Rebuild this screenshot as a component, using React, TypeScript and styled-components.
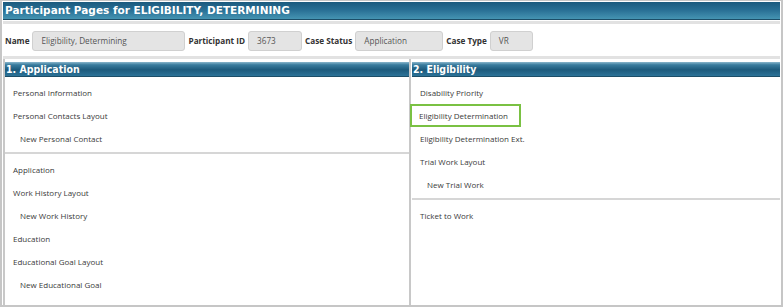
import React from 'react';
import styled, {createGlobalStyle} from 'styled-components';

const GlobalStyle = createGlobalStyle`
    html, body {
        margin: 0;
        padding: 0;
        background: #fff;
    }
`

type Item = {label: string; indent?: boolean; selected?: boolean};

const applicationGroups: Item[][] = [
    [
        {label: 'Personal Information'},
        {label: 'Personal Contacts Layout'},
        {label: 'New Personal Contact', indent: true},
    ],
    [
        {label: 'Application'},
        {label: 'Work History Layout'},
        {label: 'New Work History', indent: true},
        {label: 'Education'},
        {label: 'Educational Goal Layout'},
        {label: 'New Educational Goal', indent: true},
    ],
];

const eligibilityGroups: Item[][] = [
    [
        {label: 'Disability Priority'},
        {label: 'Eligibility Determination', selected: true},
        {label: 'Eligibility Determination Ext.'},
        {label: 'Trial Work Layout'},
        {label: 'New Trial Work', indent: true},
    ],
    [
        {label: 'Ticket to Work'},
    ],
];

const Panel = ({title, groups, wide}: {title: string; groups: Item[][]; wide?: boolean}) => {
    return (
        <StyledPanel $wide={wide}>
            <StyledPanelHeader>{title}</StyledPanelHeader>
            {groups.map((group, i) => (
                <StyledGroup key={i}>
                    {group.map((item) => (
                        <StyledItem key={item.label} $indent={item.indent} $selected={item.selected}>
                            {item.label}
                        </StyledItem>
                    ))}
                </StyledGroup>
            ))}
        </StyledPanel>
    );
};

const App = () => {
    return (
        <>
            <GlobalStyle/>
            <StyledFrame>
                <StyledTitleBar>Participant Pages for ELIGIBILITY, DETERMINING</StyledTitleBar>
                <StyledInfoRow>
                    <StyledLabel>Name</StyledLabel>
                    <StyledField $width={153}>Eligibility, Determining</StyledField>
                    <StyledLabel>Participant ID</StyledLabel>
                    <StyledField $width={54}>3673</StyledField>
                    <StyledLabel>Case Status</StyledLabel>
                    <StyledField $width={88}>Application</StyledField>
                    <StyledLabel>Case Type</StyledLabel>
                    <StyledField $width={43}>VR</StyledField>
                </StyledInfoRow>
                <StyledPanels>
                    <Panel title='1. Application' groups={applicationGroups} wide/>
                    <Panel title='2. Eligibility' groups={eligibilityGroups}/>
                </StyledPanels>
            </StyledFrame>
        </>
    );
};

const StyledFrame = styled.div`
    box-sizing: border-box;
    width: 783px;
    height: 307px;
    border: 2px solid #c6c6c6;
    border-top-width: 1px;
    padding: 1px 1px 0 1px;
    display: flex;
    flex-direction: column;
    background: #fff;
`

const StyledTitleBar = styled.div`
    height: 17px;
    padding-left: 2px;
    display: flex;
    align-items: center;
    background: linear-gradient(to bottom, #1b5a7e 0%, #2a7196 50%, #4594b2 100%);
    border-bottom: 1px solid #1c4e68;
    color: #fff;
    font: 700 10.5px/1 'DejaVu Sans', Verdana, sans-serif;
`

const StyledInfoRow = styled.div`
    margin-top: 1px;
    height: 30px;
    box-sizing: content-box;
    border-top: 3px solid #e2e2e2;
    border-bottom: 3px solid #e2e2e2;
    display: flex;
    align-items: center;
    padding: 2px 0 0 2px;
`

const StyledLabel = styled.span`
    font: 700 8.2px/1 'Open Sans', sans-serif;
    color: #333;
    margin-right: 3px;
`

const StyledField = styled.div<{$width: number}>`
    box-sizing: border-box;
    width: ${(p) => p.$width}px;
    height: 20px;
    margin-right: 3px;
    padding-left: 8px;
    display: flex;
    align-items: center;
    background: #e4e4e4;
    border: 1px solid #d0d0d0;
    border-radius: 3px;
    color: #555;
    font: 400 8.2px/1 'Open Sans', sans-serif;
`

const StyledPanels = styled.div`
    flex: 1;
    display: flex;
    padding-top: 3px;
    border-left: 2px solid #c8c8c8;
`

const StyledPanel = styled.div<{$wide?: boolean}>`
    flex: ${(p) => (p.$wide ? '0 0 404px' : '1')};
    display: flex;
    flex-direction: column;

    & + & {
        border-left: 2px solid #c8c8c8;
        margin-top: -3px;
        padding-top: 3px;
        padding-left: 1px;
    }
`

const StyledPanelHeader = styled.div`
    height: 14px;
    padding-left: 1px;
    display: flex;
    align-items: center;
    background: linear-gradient(to bottom, #8ab6cc 0%, #3a7c9e 20%, #1d5a7c 55%, #2c7398 100%);
    border-bottom: 1px solid #1c4e68;
    color: #fff;
    font: 700 10.5px/1 'DejaVu Sans Condensed', 'DejaVu Sans', sans-serif;
`

const StyledGroup = styled.div`
    padding: 4px 0 2px 0;

    & + & {
        border-top: 2px solid #d6d6d6;
    }
`

const StyledItem = styled.div<{$indent?: boolean; $selected?: boolean}>`
    box-sizing: border-box;
    height: 23px;
    display: flex;
    align-items: center;
    width: fit-content;
    padding: 0 ${(p) => (p.$selected ? 11 : 6)}px 0 ${(p) => (p.$indent ? 13 : p.$selected ? 7 : 6)}px;
    color: #3a3a3a;
    font: 400 8px/1 'Open Sans', sans-serif;
    border: 2px solid ${(p) => (p.$selected ? '#7ac143' : 'transparent')};
    margin-left: ${(p) => (p.$selected ? -2 : 0)}px;
`

export default App;
